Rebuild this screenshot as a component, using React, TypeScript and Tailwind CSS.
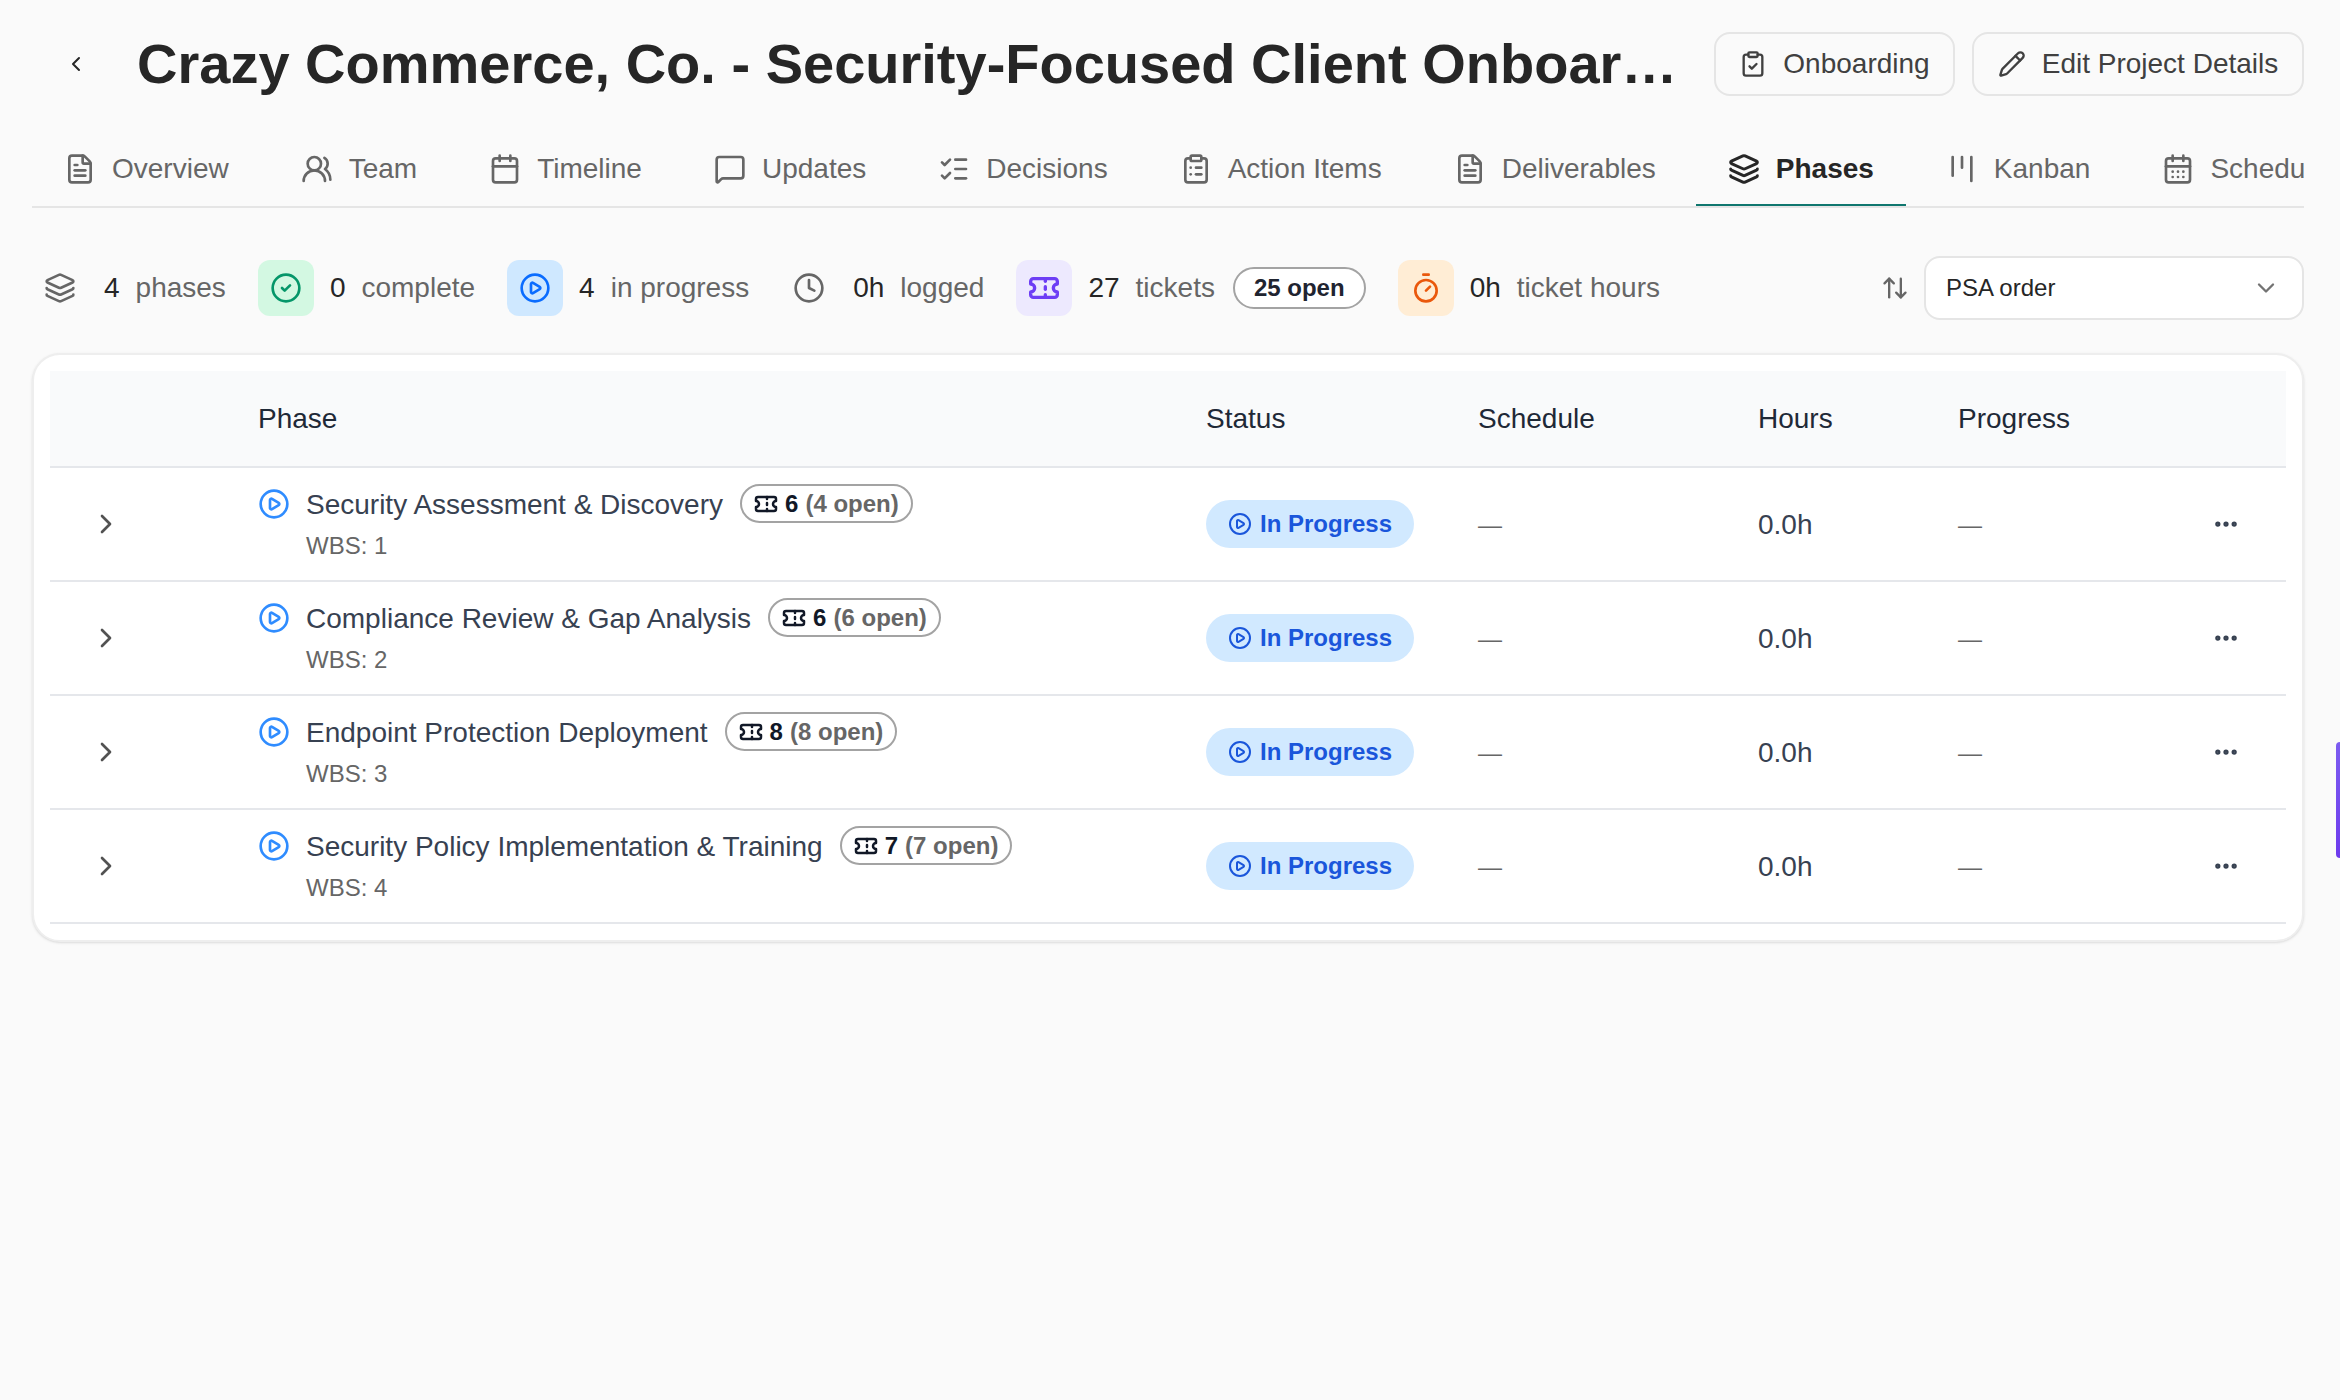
import { ArrowUpDown, Calendar, CalendarDays, ChevronDown, ChevronLeft, ChevronRight, CircleCheck, CirclePlay, ClipboardCheck, ClipboardList, Clock, Ellipsis, FileText, Kanban, Layers, ListChecks, MessageSquare, Pencil, Ticket, Timer, UsersRound } from 'lucide-react';
import type { ReactNode } from 'react';

const tabs = [
  { label: 'Overview', icon: FileText },
  { label: 'Team', icon: UsersRound },
  { label: 'Timeline', icon: Calendar },
  { label: 'Updates', icon: MessageSquare },
  { label: 'Decisions', icon: ListChecks },
  { label: 'Action Items', icon: ClipboardList },
  { label: 'Deliverables', icon: FileText },
  { label: 'Phases', icon: Layers, active: true },
  { label: 'Kanban', icon: Kanban },
  { label: 'Schedule', icon: CalendarDays },
];

const phases = [
  { name: 'Security Assessment & Discovery', wbs: 1, tickets: 6, open: 4 },
  { name: 'Compliance Review & Gap Analysis', wbs: 2, tickets: 6, open: 6 },
  { name: 'Endpoint Protection Deployment', wbs: 3, tickets: 8, open: 8 },
  { name: 'Security Policy Implementation & Training', wbs: 4, tickets: 7, open: 7 },
];

const Stat = ({ box, icon, value, label, children }: { box: string; icon: ReactNode; value: string; label: string; children?: ReactNode }) => (
  <div className="flex items-center gap-4">
    <div className={`flex h-14 w-14 items-center justify-center rounded-[12px] ${box}`}>{icon}</div>
    <span className="text-[28px] text-[#262626]">{value}</span>
    <span className="text-[28px] text-[#666666]">{label}</span>
    {children}
  </div>
);

const cols = 'grid grid-cols-[192px_948px_272px_280px_200px_200px_1fr] items-center';

export default function App() {
  return (
    <div className="relative min-h-[1400px] overflow-hidden bg-[#fafafa] font-['Liberation_Sans',Arial,sans-serif]">
      <div className="pl-8 pr-9 pt-8">
        <div className="flex h-16 items-center">
          <ChevronLeft size={24} strokeWidth={2} className="ml-8 shrink-0 text-[#262626]" />
          <h1 className="ml-[49px] mr-[34px] min-w-0 flex-1 truncate text-[56px] font-bold text-[#262626]">
            Crazy Commerce, Co. - Security-Focused Client Onboarding
          </h1>
          <button className="flex h-16 w-[241px] shrink-0 items-center justify-center gap-4 rounded-[16px] border-2 border-[#e5e5e5] text-[28px] text-[#404040]">
            <ClipboardCheck size={28} />
            Onboarding
          </button>
          <button className="ml-[17px] flex h-16 w-[332px] shrink-0 items-center justify-center gap-4 rounded-[16px] border-2 border-[#e5e5e5] text-[28px] text-[#404040]">
            <Pencil size={28} />
            Edit Project Details
          </button>
        </div>

        <div className="mt-12 flex h-[64px] gap-2 overflow-hidden border-b-2 border-[#e5e5e5]">
          {tabs.map((tab) => (
            <div
              key={tab.label}
              className={`flex shrink-0 items-center gap-4 border-b-2 px-8 pb-[10px] text-[28px] ${
                tab.active ? 'border-[#0f766e] font-bold text-[#262626]' : 'border-transparent text-[#666666]'
              }`}
            >
              <tab.icon size={32} strokeWidth={tab.active ? 2.25 : 2} />
              {tab.label}
            </div>
          ))}
        </div>

        <div className="mt-12 flex items-center justify-between">
          <div className="flex items-center gap-8">
            <Stat box="" icon={<Layers size={32} className="text-[#666666]" />} value="4" label="phases" />
            <Stat box="bg-[#d3f8e2]" icon={<CircleCheck size={32} className="text-[#059669]" />} value="0" label="complete" />
            <Stat box="bg-[#cfe8ff]" icon={<CirclePlay size={32} className="text-[#0a6cff]" />} value="4" label="in progress" />
            <Stat box="" icon={<Clock size={32} className="text-[#666666]" />} value="0h" label="logged" />
            <Stat box="bg-[#ede9fe]" icon={<Ticket size={32} strokeWidth={2.5} className="text-[#6d3df5]" />} value="27" label="tickets">
              <span className="ml-[2px] rounded-full border-2 border-[#a3a3a3] bg-white px-[19px] py-[1px] text-[24px] font-bold text-[#1f2430]">25 open</span>
            </Stat>
            <Stat box="bg-[#ffedd5]" icon={<Timer size={32} className="text-[#ea580c]" />} value="0h" label="ticket hours" />
          </div>
          <div className="flex items-center gap-[15px]">
            <ArrowUpDown size={28} className="text-[#666666]" />
            <div className="flex h-16 w-[380px] items-center justify-between rounded-[16px] border-2 border-[#e5e5e5] bg-white pl-5 pr-[22px] text-[24px] text-[#262626]">
              PSA order
              <ChevronDown size={28} className="text-[#737373]" />
            </div>
          </div>
        </div>

        <div className="mt-[33px] rounded-[28px] border-2 border-[#eeeeee] bg-white p-4 shadow-sm">
          <div className={`${cols} h-[97px] border-b-2 border-[#e5e7eb] bg-[#f9fafb] text-[28px] text-[#1f2937]`}>
            <div />
            <div className="pl-4">Phase</div>
            <div className="pl-4">Status</div>
            <div className="pl-4">Schedule</div>
            <div className="pl-4">Hours</div>
            <div className="pl-4">Progress</div>
            <div />
          </div>
          {phases.map((p) => (
            <div key={p.wbs} className={`${cols} h-[114px] border-b-2 border-[#e5e7eb]`}>
              <div className="pl-10">
                <ChevronRight size={32} className="text-[#525252]" />
              </div>
              <div className="pb-[3px] pl-4">
                <div className="flex items-center">
                  <CirclePlay size={32} className="shrink-0 text-[#2f8cff]" />
                  <span className="ml-4 mt-[2px] text-[28px] text-[#374151]">{p.name}</span>
                  <span className="ml-[17px] flex h-[39px] items-center gap-[7px] rounded-full border-2 border-[#a3a3a3] px-[12px] text-[24px] font-bold">
                    <Ticket size={24} strokeWidth={2.5} className="text-[#111827]" />
                    <span className="text-[#111827]">{p.tickets}</span>
                    <span className="text-[#666666]">({p.open} open)</span>
                  </span>
                </div>
                <div className="mt-[2px] pl-12 text-[24px] text-[#666666]">WBS: {p.wbs}</div>
              </div>
              <div className="pl-4">
                <span className="inline-flex h-12 items-center gap-2 rounded-full bg-[#d1e9ff] px-[22px] text-[24px] font-bold text-[#1a56db]">
                  <CirclePlay size={24} />
                  In Progress
                </span>
              </div>
              <div className="pl-4 pt-[2px] text-[24px] text-[#666666]">—</div>
              <div className="pl-4 pt-[1px] text-[28px] text-[#374151]">0.0h</div>
              <div className="pl-4 pt-[2px] text-[24px] text-[#666666]">—</div>
              <div className="pl-[70px]">
                <Ellipsis size={28} strokeWidth={2.5} className="text-[#374151]" />
              </div>
            </div>
          ))}
        </div>
      </div>
      <div className="absolute right-0 top-[742px] h-[116px] w-1 rounded-l-[8px] bg-gradient-to-b from-[#7c5cf0] to-[#6d3aed]" />
    </div>
  );
}
